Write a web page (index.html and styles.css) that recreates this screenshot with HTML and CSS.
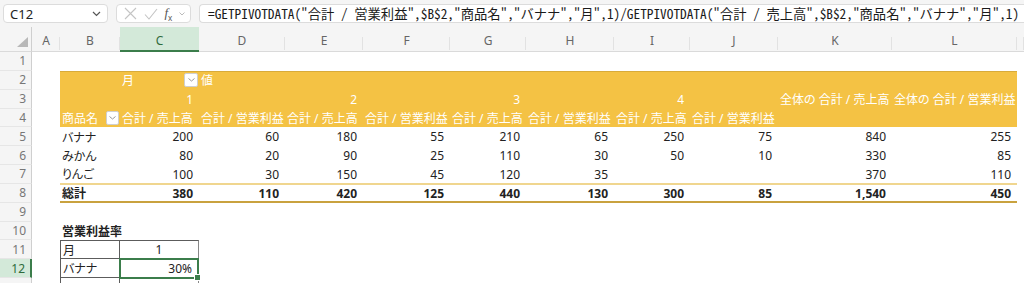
FILE: index.html
```html
<!DOCTYPE html>
<html lang="ja">
<head>
    <meta charset="UTF-8">
    <meta name="viewport" content="width=device-width, initial-scale=1.0">
    <title>営業利益率 - GETPIVOTDATA</title>
    <link rel="stylesheet" href="styles.css">
</head>
<body>
    <div class="formula-bar">
        <div class="name-box">
            <span>C12</span>
            <svg width="9" height="6" viewBox="0 0 9 6"><path d="M1 1l3.5 3.5L8 1" fill="none" stroke="#555" stroke-width="1.2"/></svg>
        </div>
        <div class="fx-buttons">
            <svg width="13" height="13" viewBox="0 0 13 13"><path d="M1 1l11 11M12 1L1 12" stroke="#c4c4c4" stroke-width="1.1"/></svg>
            <svg width="14" height="12" viewBox="0 0 14 12"><path d="M1 6.5l4 4.5L13 1" fill="none" stroke="#c4c4c4" stroke-width="1.1"/></svg>
            <span class="fx">f<sub>x</sub></span>
            <svg width="6" height="4" viewBox="0 0 6 4"><path d="M.5.5L3 3 5.5.5" fill="none" stroke="#bbb" stroke-width="1"/></svg>
        </div>
        <div class="formula-input">=GETPIVOTDATA("合計 / 営業利益",$B$2,"商品名","バナナ","月",1)/GETPIVOTDATA("合計 / 売上高",$B$2,"商品名","バナナ","月",1)</div>
    </div>

    <div class="sheet">
        <!-- headers -->
        <div class="corner">
            <svg width="11" height="10" viewBox="0 0 11 10"><path d="M11 0v10H0z" fill="#b8b8b8"/></svg>
        </div>
        <div class="col-head cA">A</div>
        <div class="col-head cB">B</div>
        <div class="col-head cC sel">C</div>
        <div class="col-head cD">D</div>
        <div class="col-head cE">E</div>
        <div class="col-head cF">F</div>
        <div class="col-head cG">G</div>
        <div class="col-head cH">H</div>
        <div class="col-head cI">I</div>
        <div class="col-head cJ">J</div>
        <div class="col-head cK">K</div>
        <div class="col-head cL">L</div>
        <div class="col-head cM"></div>

        <div class="row-head r1">1</div>
        <div class="row-head r2">2</div>
        <div class="row-head r3">3</div>
        <div class="row-head r4">4</div>
        <div class="row-head r5">5</div>
        <div class="row-head r6">6</div>
        <div class="row-head r7">7</div>
        <div class="row-head r8">8</div>
        <div class="row-head r9">9</div>
        <div class="row-head r10">10</div>
        <div class="row-head r11">11</div>
        <div class="row-head r12 sel">12</div>
        <div class="row-head r13"></div>

        <!-- pivot table -->
        <div class="pv-band"></div>
        <div class="pv-total"></div>

        <div class="cell hdr r2 cC between">月<span class="dd"><svg width="7" height="4" viewBox="0 0 7 4"><path d="M.5.5L3.5 3 6.5.5" fill="none" stroke="#999" stroke-width="1"/></svg></span></div>
        <div class="cell hdr r2 cD">値</div>

        <div class="cell hdr num r3 cC">1</div>
        <div class="cell hdr num r3 cE">2</div>
        <div class="cell hdr num r3 cG">3</div>
        <div class="cell hdr num r3 cI">4</div>
        <div class="cell hdr r3 cK">全体の 合計 / 売上高</div>
        <div class="cell hdr r3 cL">全体の 合計 / 営業利益</div>

        <div class="cell hdr r4 cB between">商品名<span class="dd small"><svg width="7" height="4" viewBox="0 0 7 4"><path d="M.5.5L3.5 3 6.5.5" fill="none" stroke="#999" stroke-width="1"/></svg></span></div>
        <div class="cell hdr r4 cC">合計 / 売上高</div>
        <div class="cell hdr r4 cD">合計 / 営業利益</div>
        <div class="cell hdr r4 cE">合計 / 売上高</div>
        <div class="cell hdr r4 cF">合計 / 営業利益</div>
        <div class="cell hdr r4 cG">合計 / 売上高</div>
        <div class="cell hdr r4 cH">合計 / 営業利益</div>
        <div class="cell hdr r4 cI">合計 / 売上高</div>
        <div class="cell hdr r4 cJ">合計 / 営業利益</div>

        <div class="cell r5 cB">バナナ</div>
        <div class="cell num r5 cC">200</div>
        <div class="cell num r5 cD">60</div>
        <div class="cell num r5 cE">180</div>
        <div class="cell num r5 cF">55</div>
        <div class="cell num r5 cG">210</div>
        <div class="cell num r5 cH">65</div>
        <div class="cell num r5 cI">250</div>
        <div class="cell num r5 cJ">75</div>
        <div class="cell num r5 cK">840</div>
        <div class="cell num r5 cL">255</div>

        <div class="cell r6 cB">みかん</div>
        <div class="cell num r6 cC">80</div>
        <div class="cell num r6 cD">20</div>
        <div class="cell num r6 cE">90</div>
        <div class="cell num r6 cF">25</div>
        <div class="cell num r6 cG">110</div>
        <div class="cell num r6 cH">30</div>
        <div class="cell num r6 cI">50</div>
        <div class="cell num r6 cJ">10</div>
        <div class="cell num r6 cK">330</div>
        <div class="cell num r6 cL">85</div>

        <div class="cell r7 cB">りんご</div>
        <div class="cell num r7 cC">100</div>
        <div class="cell num r7 cD">30</div>
        <div class="cell num r7 cE">150</div>
        <div class="cell num r7 cF">45</div>
        <div class="cell num r7 cG">120</div>
        <div class="cell num r7 cH">35</div>
        <div class="cell num r7 cK">370</div>
        <div class="cell num r7 cL">110</div>

        <div class="cell bold r8 cB">総計</div>
        <div class="cell bold num r8 cC">380</div>
        <div class="cell bold num r8 cD">110</div>
        <div class="cell bold num r8 cE">420</div>
        <div class="cell bold num r8 cF">125</div>
        <div class="cell bold num r8 cG">440</div>
        <div class="cell bold num r8 cH">130</div>
        <div class="cell bold num r8 cI">300</div>
        <div class="cell bold num r8 cJ">85</div>
        <div class="cell bold num r8 cK">1,540</div>
        <div class="cell bold num r8 cL">450</div>

        <!-- margin table -->
        <div class="cell bold r10 cB">営業利益率</div>
        <div class="cell box r11 cB">月</div>
        <div class="cell box center r11 cC">1</div>
        <div class="cell box r12 cB">バナナ</div>
        <div class="cell box num r12 cC">30%</div>
        <div class="cell box r13 cB"></div>
        <div class="cell box num r13 cC"></div>

        <div class="selection r12 cC"></div>
    </div>
</body>
</html>
```

FILE: styles.css
```css
* {
    margin: 0;
    padding: 0;
    box-sizing: border-box;
}

body {
    width: 1024px;
    height: 283px;
    overflow: hidden;
    background: #fff;
    font-family: 'Noto Sans', 'Noto Sans CJK JP', sans-serif;
    font-size: 12px;
    color: #222;
}

/* formula bar */
.formula-bar {
    display: flex;
    gap: 8px;
    height: 27px;
    padding: 4px 0 0 3px;
    background: #f5f5f5;
    overflow: hidden;
}

.name-box,
.fx-buttons,
.formula-input {
    height: 19px;
    background: #fff;
    border: 1px solid #dcdcdc;
    border-radius: 4px;
    display: flex;
    align-items: center;
}

.name-box {
    width: 105px;
    padding: 0 6px 0 6px;
    justify-content: space-between;
    font-size: 13px;
    color: #222;
}

.fx-buttons {
    width: 75px;
    padding: 0 5px 0 7px;
    justify-content: space-between;
}

.fx {
    font-family: 'Liberation Serif', serif;
    font-style: italic;
    font-size: 13px;
    color: #555;
    line-height: 1;
}

.fx sub {
    font-size: 8px;
    font-style: normal;
    font-family: 'Noto Sans', sans-serif;
}

.formula-input {
    flex: 1;
    min-width: 0;
    padding-left: 8px;
    border-right: none;
    border-radius: 4px 0 0 4px;
    font-family: 'Noto Sans Mono CJK JP', 'Liberation Mono', 'Noto Sans CJK JP', monospace;
    font-size: 13.3px;
    color: #1a1a1a;
    white-space: nowrap;
    overflow: hidden;
}

/* sheet grid */
.sheet {
    display: grid;
    grid-template-columns: 32px 28px 60px 79px 86px 78px 87px 76px 88px 76px 88px 114px 125px 1fr;
    grid-template-rows: 25px repeat(13, 18.85px);
}

.r1 { grid-row: 2; }
.r2 { grid-row: 3; }
.r3 { grid-row: 4; }
.r4 { grid-row: 5; }
.r5 { grid-row: 6; }
.r6 { grid-row: 7; }
.r7 { grid-row: 8; }
.r8 { grid-row: 9; }
.r9 { grid-row: 10; }
.r10 { grid-row: 11; }
.r11 { grid-row: 12; }
.r12 { grid-row: 13; }
.r13 { grid-row: 14; }

.cA { grid-column: 2; }
.cB { grid-column: 3; }
.cC { grid-column: 4; }
.cD { grid-column: 5; }
.cE { grid-column: 6; }
.cF { grid-column: 7; }
.cG { grid-column: 8; }
.cH { grid-column: 9; }
.cI { grid-column: 10; }
.cJ { grid-column: 11; }
.cK { grid-column: 12; }
.cL { grid-column: 13; }
.cM { grid-column: 14; }

.corner {
    grid-row: 1;
    grid-column: 1;
    background: #f5f5f5;
    border-right: 1px solid #cfcfcf;
    border-bottom: 1px solid #dadada;
    display: flex;
    align-items: flex-end;
    justify-content: flex-end;
    padding: 0 3px 4px 0;
}

.col-head {
    grid-row: 1;
    display: flex;
    align-items: flex-end;
    justify-content: center;
    padding-bottom: 2px;
    background: linear-gradient(#e2e2e2, #e2e2e2) right 10px / 1px 13px no-repeat, #f5f5f5;
    border-bottom: 1px solid #dadada;
    font-size: 12px;
    color: #666;
}

.col-head.sel {
    background: #d3e9d9;
    color: #2f6b3c;
    border-bottom: 2px solid #3b7d4b;
    padding-bottom: 1px;
}

.row-head {
    grid-column: 1;
    display: flex;
    align-items: center;
    justify-content: flex-end;
    padding-right: 5px;
    background: #f5f5f5;
    border-right: 1px solid #cfcfcf;
    border-bottom: 1px solid #e6e6e6;
    font-size: 12px;
    color: #777;
}

.row-head.sel {
    background: #d3e9d9;
    color: #2f6b3c;
    border-right: 2px solid #3b7d4b;
}

/* pivot */
.pv-band {
    grid-row: 3 / 6;
    grid-column: 3 / 14;
    background: #f4c244;
    border-top: 1px solid #d8ab3a;
}

.pv-total {
    grid-row: 9;
    grid-column: 3 / 14;
    margin-top: -1px;
    border-top: 2px solid #f0d68f;
    border-bottom: 2px solid #c9a23f;
}

.cell {
    display: flex;
    align-items: center;
    padding: 0 2px;
    white-space: nowrap;
    min-width: 0;
    font-feature-settings: "palt";
}

.cell.num {
    justify-content: flex-end;
    padding-right: 6px;
}

.cell.center {
    justify-content: center;
}

.cell.between {
    justify-content: space-between;
    padding-right: 1px;
}

.hdr {
    color: #fff;
}

.bold {
    font-weight: 700;
}

.dd {
    width: 14px;
    height: 14px;
    background: #fff;
    border: 1px solid #cfcfcf;
    border-radius: 2px;
    display: flex;
    align-items: center;
    justify-content: center;
}

.dd.small {
    width: 13px;
}

/* small table */
.box {
    border-right: 1px solid #5c5c5c;
    border-bottom: 1px solid #5c5c5c;
}

.box.cB {
    border-left: 1px solid #5c5c5c;
}

.box.r11 {
    border-top: 1px solid #5c5c5c;
}

.box.cC {
    border-right-color: #888;
}

.selection {
    position: relative;
    margin: -1px 0 -1px -1px;
    border: 2px solid #3b7d4b;
    pointer-events: none;
}

.selection::after {
    content: '';
    position: absolute;
    right: -4px;
    bottom: -4px;
    width: 5px;
    height: 5px;
    background: #3b7d4b;
    border: 1px solid #fff;
}
```
